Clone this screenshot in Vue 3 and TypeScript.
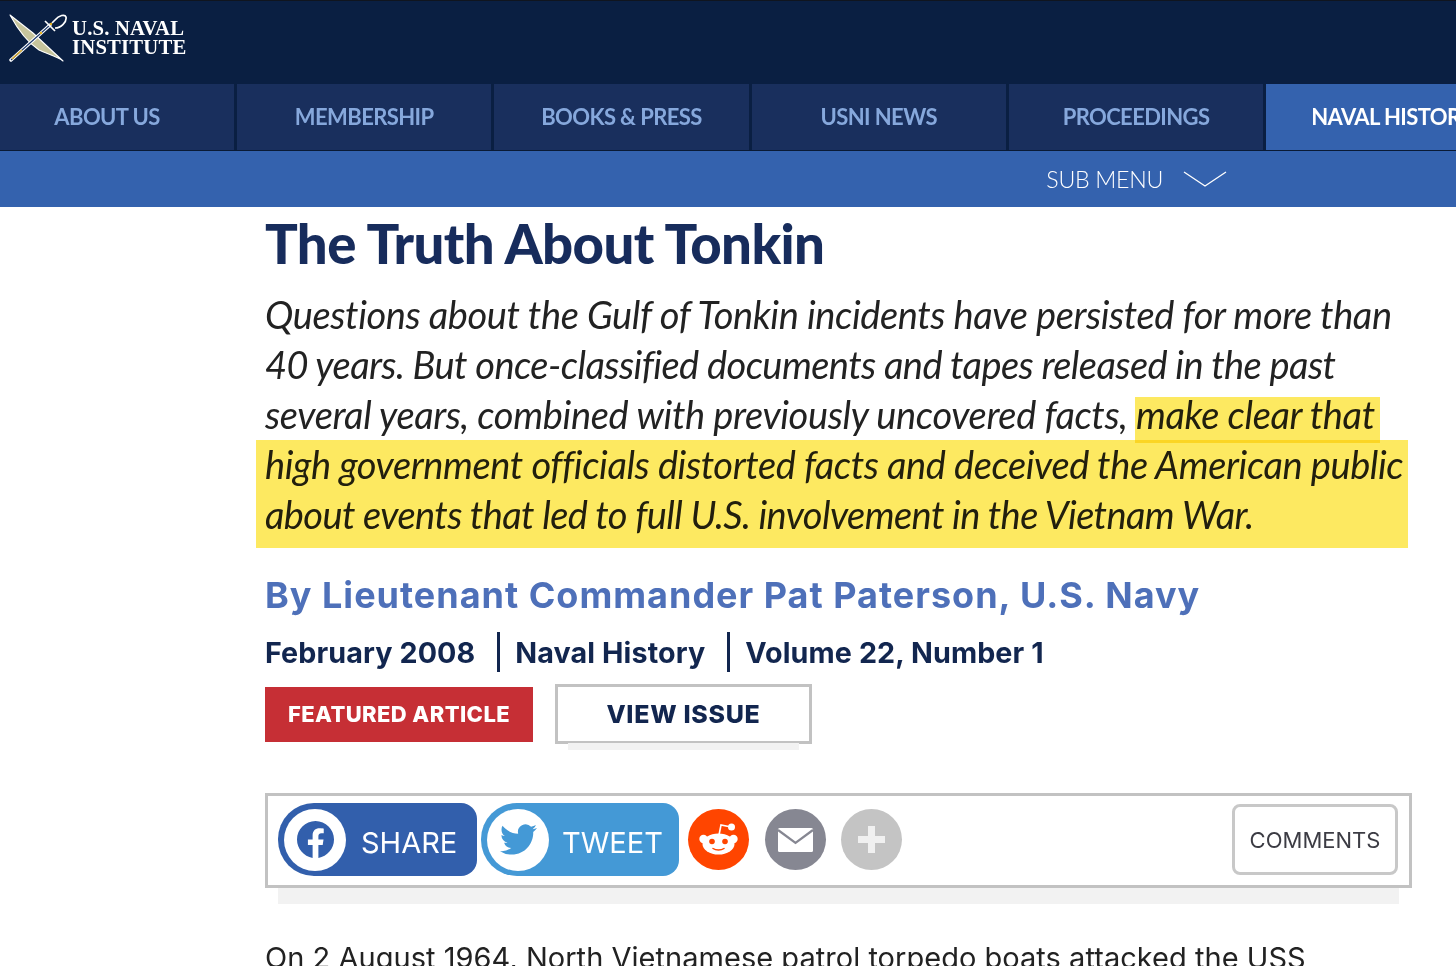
<script setup lang="ts">
const tabs = ['ABOUT US', 'MEMBERSHIP', 'BOOKS & PRESS', 'USNI NEWS', 'PROCEEDINGS', 'NAVAL HISTORY']
const meta = ['February 2008', 'Naval History', 'Volume 22, Number 1']
// per-line tracking, the lines were set a little unevenly in the original
const lede = [
  { text: 'Questions about the Gulf of Tonkin incidents have persisted for more than', track: -0.4 },
  { text: '40 years. But once-classified documents and tapes released in the past', track: -0.57 },
  { text: 'several years, combined with previously uncovered facts, make clear that', track: -0.36 },
  { text: 'high government officials distorted facts and deceived the American public', track: -0.4 },
  { text: 'about events that led to full U.S. involvement in the Vietnam War.', track: -0.6 },
]
</script>

<template>
  <div class="page">
    <header class="top">
      <a class="logo">
        <svg class="logo-mark" width="58" height="48" viewBox="0 0 58 48">
          <path d="M1 1 L24 19 L54 47 C48 42 38 40 30 36 C18 28 8 14 1 1Z" fill="#c6c49c" stroke="#fff" stroke-width="1.1" stroke-linejoin="round" />
          <path d="M41 11 L2 46" stroke="#fff" stroke-width="3.4" stroke-linecap="round" />
          <path d="M41 11 L2 46" stroke="#1d3a6e" stroke-width="1.1" />
          <path d="M3 45 L13 36" stroke="#e0b030" stroke-width="1.4" />
          <path d="M36 7 L46 17 M46 14 C52 14 58 8 57 3 C56 0 50 1 46 6 L43 9" fill="none" stroke="#fff" stroke-width="1.7" />
          <circle cx="32" cy="19" r="1.2" fill="#e8b420" />
          <circle cx="42" cy="10" r="1.2" fill="#e8b420" />
        </svg>
        <span class="logo-text">U.S. NAVAL<br />INSTITUTE</span>
      </a>
    </header>

    <nav class="tabs">
      <a v-for="(t, i) in tabs" :key="t" class="tab" :class="{ active: i === 5 }">{{ t }}</a>
    </nav>

    <div class="subbar">
      <span>SUB MENU</span>
      <svg width="44" height="18" viewBox="0 0 44 18"><path d="M1 2 L22 16 L43 2" fill="none" stroke="#fff" stroke-width="1.3" /></svg>
    </div>

    <main class="article">
      <h1>The Truth About Tonkin</h1>

      <div class="lede">
        <p>
          <span v-for="line in lede" :key="line.text" class="lede-line" :style="{ letterSpacing: line.track + 'px' }">{{ line.text }}</span>
        </p>
        <i class="mark mark-a"></i>
        <i class="mark mark-b"></i>
      </div>

      <div class="byline">By Lieutenant Commander Pat Paterson, U.S. Navy</div>

      <div class="meta">
        <span v-for="m in meta" :key="m" class="meta-item">{{ m }}</span>
      </div>

      <div class="tags">
        <span class="tag-featured">FEATURED ARTICLE</span>
        <a class="view-issue">VIEW ISSUE</a>
      </div>

      <div class="share">
        <a class="pill fb">
          <span class="disc">
            <svg width="37" height="37" viewBox="0 0 24 24" fill="#325fac"><path d="M24 12.073c0-6.627-5.373-12-12-12s-12 5.373-12 12c0 5.99 4.388 10.954 10.125 11.854v-8.385H7.078v-3.47h3.047V9.43c0-3.007 1.792-4.669 4.533-4.669 1.312 0 2.686.235 2.686.235v2.953H15.83c-1.491 0-1.956.925-1.956 1.874v2.25h3.328l-.532 3.47h-2.796v8.385C19.612 23.027 24 18.062 24 12.073z" /></svg>
          </span>
          <span class="pill-label">SHARE</span>
        </a>
        <a class="pill tw">
          <span class="disc">
            <svg width="37" height="37" viewBox="0 0 24 24" fill="#4499d6"><path d="M23.953 4.57a10 10 0 01-2.825.775 4.958 4.958 0 002.163-2.723c-.951.555-2.005.959-3.127 1.184a4.92 4.92 0 00-8.384 4.482C7.69 8.095 4.067 6.13 1.64 3.162a4.822 4.822 0 00-.666 2.475c0 1.71.87 3.213 2.188 4.096a4.904 4.904 0 01-2.228-.616v.06a4.923 4.923 0 003.946 4.827 4.996 4.996 0 01-2.212.085 4.936 4.936 0 004.604 3.417 9.867 9.867 0 01-6.102 2.105c-.39 0-.779-.023-1.17-.067a13.995 13.995 0 007.557 2.209c9.053 0 13.998-7.496 13.998-13.985 0-.21 0-.42-.015-.63A9.935 9.935 0 0024 4.59z" /></svg>
          </span>
          <span class="pill-label">TWEET</span>
        </a>
        <a class="round reddit">
          <svg width="61" height="61" viewBox="0 0 61 61">
            <path d="M31 26 L33 16 L43 18" fill="none" stroke="#fff" stroke-width="1.6" />
            <circle cx="43.5" cy="18" r="3.5" fill="#fff" />
            <circle cx="15.5" cy="30" r="4.2" fill="#fff" />
            <circle cx="45.5" cy="30" r="4.2" fill="#fff" />
            <ellipse cx="30.5" cy="35" rx="16" ry="10.5" fill="#fff" />
            <circle cx="24" cy="32.5" r="2.8" fill="#ff4500" />
            <circle cx="37" cy="32.5" r="2.8" fill="#ff4500" />
            <path d="M25 39.5 C28 41.6 33 41.6 36 39.5" fill="none" stroke="#ff4500" stroke-width="1.5" stroke-linecap="round" />
          </svg>
        </a>
        <a class="round mail">
          <svg width="61" height="61" viewBox="0 0 61 61">
            <rect x="13" y="19" width="35" height="24" rx="1.5" fill="#fff" />
            <path d="M13 21 L30.5 34 L48 21" fill="none" stroke="#868792" stroke-width="2.2" />
          </svg>
        </a>
        <a class="round more">
          <svg width="61" height="61" viewBox="0 0 61 61">
            <path d="M30.5 17 V44 M17 30.5 H44" fill="none" stroke="#f0f0f0" stroke-width="7" />
          </svg>
        </a>
        <a class="comments">COMMENTS</a>
      </div>

      <p class="body-text">On 2 August 1964, North Vietnamese patrol torpedo boats attacked the USS</p>
    </main>
  </div>
</template>

<style scoped>
.page {
  height: 966px;
  overflow: hidden;
  background: #fff;
}

.top {
  display: flex;
  align-items: center;
  height: 84px;
  box-sizing: border-box;
  padding: 0 0 9px 9px;
  background: #0a1f42;
  border-top: 1px solid #10151f;
}

.logo {
  display: flex;
  align-items: center;
  gap: 5px;
}

.logo-text {
  font-family: "Liberation Serif", serif;
  font-weight: 700;
  font-size: 20.7px;
  line-height: 19px;
  color: #fff;
  letter-spacing: 0.2px;
}

.tabs {
  display: flex;
  gap: 3px;
  height: 66px;
  background: #0a1f42;
  border-bottom: 1px solid #0a1a35;
  overflow: hidden;
}

.tab {
  flex: 0 0 254.3px;
  display: flex;
  align-items: center;
  justify-content: center;
  padding-bottom: 1px;
  box-sizing: border-box;
  background: #192f5d;
  color: #86a8dc;
  font-family: Lato, sans-serif;
  font-weight: 700;
  font-size: 22px;
  letter-spacing: -0.6px;
  white-space: nowrap;
}

.tab:first-child {
  flex-basis: 234px;
  padding-right: 20px;
}

.tab.active {
  flex: 0 0 190px;
  justify-content: flex-start;
  padding-left: 45px;
  background: #3462ae;
  color: #fff;
}

.subbar {
  display: flex;
  align-items: center;
  justify-content: flex-end;
  gap: 20px;
  height: 56px;
  padding-right: 229px;
  background: #3462ae;
  color: #fff;
  font-family: Lato, sans-serif;
  font-weight: 300;
  font-size: 23.2px;
  letter-spacing: -0.3px;
}

.article {
  padding: 0 44px 0 265px;
}

h1 {
  margin: 6px 0 0;
  font-family: Lato, sans-serif;
  font-weight: 900;
  font-size: 54.5px;
  line-height: 60px;
  letter-spacing: -0.6px;
  color: #172c5c;
}

.lede {
  position: relative;
  margin-top: 16px;
}

.lede p {
  margin: 0;
  font-family: Lato, sans-serif;
  font-style: italic;
  font-size: 38px;
  line-height: 50px;
  color: #222;
  white-space: nowrap;
}

.lede-line {
  display: block;
}

.mark {
  position: absolute;
  background: #fde853;
  opacity: 0.92;
  mix-blend-mode: multiply;
}

.mark-a {
  left: 870px;
  top: 108px;
  width: 245px;
  height: 46px;
}

.mark-b {
  left: -9px;
  top: 151px;
  width: 1152px;
  height: 108px;
}

.byline {
  margin-top: 34px;
  font-family: Inter, sans-serif;
  font-weight: 700;
  font-size: 36px;
  line-height: 44px;
  letter-spacing: 1px;
  color: #4e70b9;
}

.meta {
  display: flex;
  align-items: center;
  margin-top: 15px;
  height: 40px;
  font-family: Inter, sans-serif;
  font-weight: 700;
  font-size: 28.7px;
  letter-spacing: 0.1px;
  color: #12264f;
}

.meta-item {
  display: flex;
  align-items: center;
  height: 40px;
}

.meta-item + .meta-item {
  margin-left: 22px;
  padding-left: 15px;
  border-left: 3px solid #12264f;
}

.tags {
  display: flex;
  align-items: center;
  gap: 22px;
  margin-top: 12px;
}

.tag-featured {
  display: flex;
  align-items: center;
  justify-content: center;
  width: 268px;
  height: 55px;
  background: #c62f35;
  color: #fff;
  font-family: Inter, sans-serif;
  font-weight: 800;
  font-size: 22px;
  letter-spacing: 0.4px;
}

.view-issue {
  position: relative;
  display: flex;
  align-items: center;
  justify-content: center;
  box-sizing: border-box;
  width: 257px;
  height: 60px;
  border: 3px solid #c2c2c2;
  color: #12264f;
  font-family: Inter, sans-serif;
  font-weight: 800;
  font-size: 25px;
  letter-spacing: 0.7px;
}

.view-issue::after {
  content: "";
  position: absolute;
  left: 10px;
  right: 10px;
  top: 56px;
  height: 7px;
  background: #f2f2f2;
}

.share {
  position: relative;
  display: flex;
  align-items: flex-start;
  box-sizing: border-box;
  height: 95px;
  margin-top: 49px;
  padding: 7px 11px 0 10px;
  border: 3px solid #c2c2c2;
}

.share::after {
  content: "";
  position: absolute;
  left: 10px;
  right: 10px;
  top: 92px;
  height: 16px;
  background: #f2f2f2;
}

.pill {
  display: flex;
  align-items: center;
  gap: 15px;
  box-sizing: border-box;
  width: 199px;
  height: 73px;
  padding-left: 6px;
  border-radius: 36px 16px 16px 36px;
  color: #fff;
  font-family: Inter, sans-serif;
  font-size: 29px;
}

.pill-label {
  margin-top: 6px;
}

.fb {
  background: #325fac;
}

.tw {
  gap: 13px;
  width: 198px;
  margin-left: 4px;
  background: #4499d6;
}

.disc {
  flex: none;
  display: flex;
  align-items: center;
  justify-content: center;
  width: 62px;
  height: 62px;
  border-radius: 50%;
  background: #fff;
}

.round {
  flex: none;
  display: block;
  width: 61px;
  height: 61px;
  margin: 6px 0 0 16px;
  border-radius: 50%;
}

.round svg {
  display: block;
}

.reddit {
  margin-left: 9px;
  background: #ff4500;
}

.mail {
  background: #868792;
}

.more {
  margin-left: 15px;
  background: #c4c4c4;
}

.comments {
  display: flex;
  align-items: center;
  justify-content: center;
  box-sizing: border-box;
  width: 166px;
  height: 71px;
  margin: 1px 0 0 auto;
  border: 3px solid #c8c8c8;
  border-radius: 8px;
  color: #3c3c44;
  font-family: Inter, sans-serif;
  font-size: 22px;
}

.body-text {
  margin: 50px 0 0;
  font-family: Inter, sans-serif;
  font-size: 29px;
  line-height: 40px;
  letter-spacing: 0.03px;
  color: #222;
  white-space: nowrap;
}
</style>

<style>
html, body {
  margin: 0;
  overflow: hidden;
}
</style>
